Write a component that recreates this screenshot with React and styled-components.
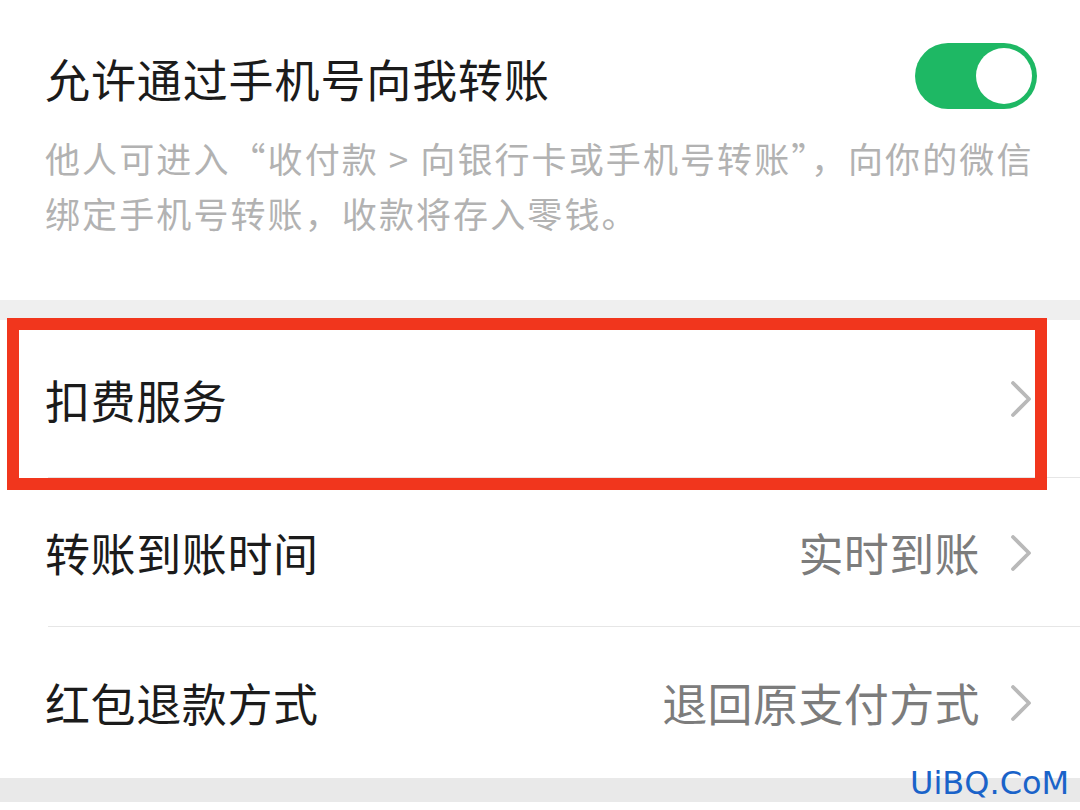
import React from 'react';
import styled, { createGlobalStyle } from 'styled-components';

const GlobalStyle = createGlobalStyle`
    html, body {
        margin: 0;
        padding: 0;
        background: #ffffff;
    }
    body {
        font-family: "Noto Sans CJK SC", "Noto Sans", sans-serif;
    }
`;

const rows = [
    { label: '扣费服务', value: '', highlight: true, height: 158 },
    { label: '转账到账时间', value: '实时到账', height: 149 },
    { label: '红包退款方式', value: '退回原支付方式', height: 151 },
];

const Chevron = () => (
    <svg width="22" height="36" viewBox="0 0 22 36">
        <polyline points="3,2 19,18 3,34" fill="none" stroke="#b9b9b9" strokeWidth="3.8" strokeLinecap="round" strokeLinejoin="round" />
    </svg>
);

const App = () => {
    return (
        <Page>
            <GlobalStyle />
            <TopSection>
                <HeaderRow>
                    <Title>允许通过手机号向我转账</Title>
                    <Toggle $on>
                        <Knob />
                    </Toggle>
                </HeaderRow>
                <Description>
                    他人可进入“收付款 &gt; 向银行卡或手机号转账”，向你的微信<br />
                    绑定手机号转账，收款将存入零钱。
                </Description>
            </TopSection>
            <Band $height={20} />
            <Group>
                {rows.map((row, index) => (
                    <Row key={index} $height={row.height} $last={index === rows.length - 1}>
                        <Label>{row.label}</Label>
                        <Right>
                            {row.value && <Value>{row.value}</Value>}
                            <Chevron />
                        </Right>
                        {row.highlight && <Highlight />}
                    </Row>
                ))}
            </Group>
            <Band $height={24} $color="#e9e9e9" />
            <Watermark>UiBQ.CoM</Watermark>
        </Page>
    );
};

export default App;

const Page = styled.div`
    position: relative;
    width: 1080px;
    height: 810px;
    overflow: hidden;
    background: #ffffff;
`;

const TopSection = styled.div`
    padding: 43px 43px 59px 45px;
    height: 300px;
    box-sizing: border-box;
`;

const HeaderRow = styled.div`
    display: flex;
    align-items: center;
    justify-content: space-between;
    height: 66px;
`;

const Title = styled.div`
    font-size: 45px;
    letter-spacing: 0.9px;
    color: #1b1b1b;
    line-height: 1;
    padding-top: 4px;
`;

const Toggle = styled.div`
    width: 122px;
    height: 66px;
    border-radius: 33px;
    background: ${p => (p.$on ? '#1eb864' : '#e5e5e5')};
    display: flex;
    align-items: center;
    justify-content: ${p => (p.$on ? 'flex-end' : 'flex-start')};
    padding: 0 5px;
    box-sizing: border-box;
`;

const Knob = styled.div`
    width: 56px;
    height: 56px;
    border-radius: 50%;
    background: #ffffff;
`;

const Description = styled.div`
    margin-top: 21px;
    font-size: 35px;
    line-height: 55px;
    letter-spacing: 2.1px;
    color: #b2b2b2;
    white-space: nowrap;
`;

const Band = styled.div`
    height: ${p => p.$height}px;
    background: ${p => p.$color || '#efefef'};
`;

const Group = styled.div`
    background: #ffffff;
`;

const Row = styled.div`
    position: relative;
    height: ${p => p.$height}px;
    display: flex;
    align-items: center;
    justify-content: space-between;
    padding: 0 48px 0 45px;
    box-sizing: border-box;

    &::after {
        content: '';
        display: ${p => (p.$last ? 'none' : 'block')};
        position: absolute;
        left: 48px;
        right: 0;
        bottom: 0;
        height: 1px;
        background: #e6e6e6;
    }
`;

const Label = styled.div`
    font-size: 45px;
    letter-spacing: 0.6px;
    color: #1b1b1b;
`;

const Right = styled.div`
    display: flex;
    align-items: center;
    gap: 30px;
`;

const Value = styled.div`
    font-size: 45px;
    letter-spacing: 0.4px;
    color: #7c7c7c;
`;

const Highlight = styled.div`
    position: absolute;
    left: 7px;
    top: -2px;
    width: 1040px;
    height: 172px;
    border: 12px solid #f1361d;
    box-sizing: border-box;
    z-index: 2;
`;

const Watermark = styled.div`
    position: absolute;
    left: 910px;
    top: 765px;
    font-family: "DejaVu Sans", sans-serif;
    font-size: 32px;
    line-height: 36px;
    color: #1a63c9;
    z-index: 3;
`;
